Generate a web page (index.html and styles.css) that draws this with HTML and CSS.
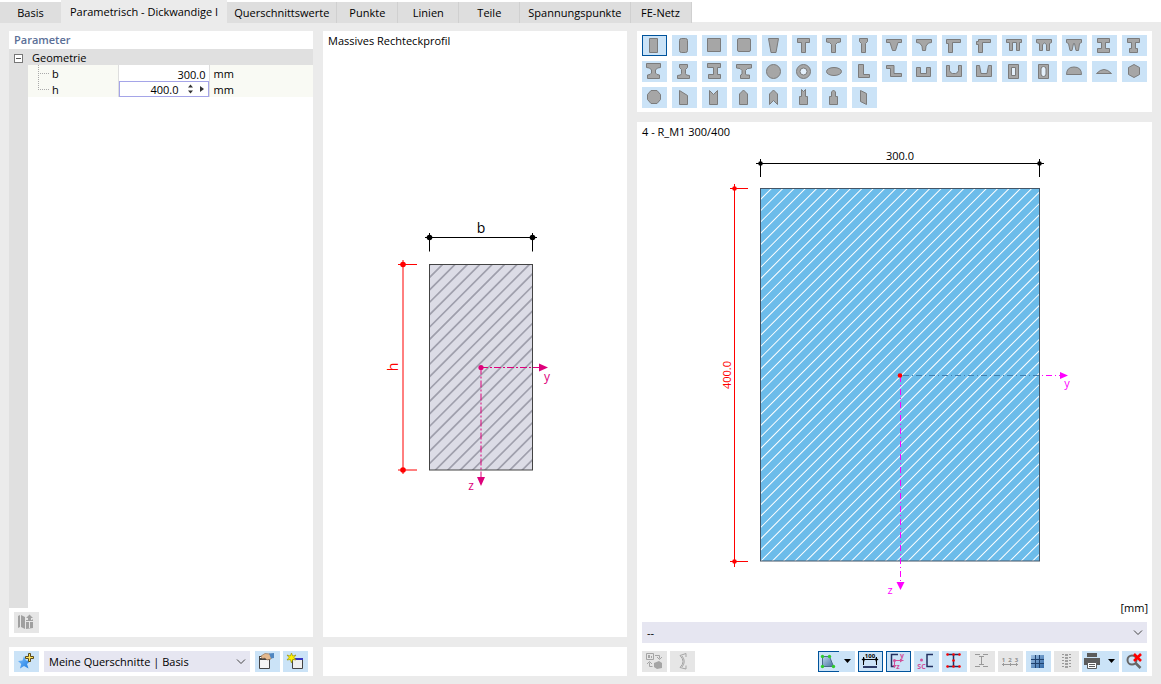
FILE: index.html
```html
<!DOCTYPE html>
<html lang="de">
<head>
<meta charset="utf-8">
<title>Querschnitt</title>
<link rel="stylesheet" href="styles.css">
</head>
<body>
<nav class="tabs" role="tablist">
  <button class="tab tab-first" role="tab">Basis</button>
  <button class="tab tab-active" role="tab" aria-selected="true">Parametrisch - Dickwandige I</button>
  <button class="tab tab-tight" role="tab">Querschnittswerte</button>
  <button class="tab tab-even" role="tab">Punkte</button>
  <button class="tab tab-even" role="tab">Linien</button>
  <button class="tab tab-even" role="tab">Teile</button>
  <button class="tab" role="tab">Spannungspunkte</button>
  <button class="tab tab-even" role="tab">FE-Netz</button>
</nav>
<main class="workspace">
  <div class="column">
    <section class="panel grow">
      <h2 class="param-title">Parameter</h2>
      <div class="param-body">
        <table class="params">
          <colgroup><col class="c-gutter"><col class="c-name"><col class="c-value"><col></colgroup>
          <tbody>
            <tr class="group"><td><button class="toggle" aria-label="Geometrie zuklappen"></button></td><th colspan="3">Geometrie</th></tr>
            <tr><td></td><th class="leaf"><label for="pb">b</label></th><td class="value"><input id="pb" type="text" value="300.0"></td><td class="unit">mm</td></tr>
            <tr><td></td><th class="leaf leaf-last"><label for="ph">h</label></th><td class="value"><div class="editing"><input id="ph" type="text" value="400.0"><button class="mini" aria-label="Wert ändern"><svg width="7" height="10" viewBox="0 0 7 10"><path d="M3.500 0.500 6 3.500H1zM3.500 9.500 1 6.500h5z"/></svg></button><button class="mini" aria-label="Mehr"><svg width="7" height="10" viewBox="0 0 7 10"><path d="M1 2 5 5 1 8z"/></svg></button></div></td><td class="unit">mm</td></tr>
          </tbody>
        </table>
      </div>
      <div class="toolbar">
        <button class="tool off" aria-label="Bibliothek"><svg viewBox="0 0 25 21"><path fill="#a0a0a0" d="M4 4l2-1v12l-2 1zM7 3l4 2v12l-4-2zM12 8h6l1-1v9l-7 1z"/><path fill="#a0a0a0" d="M15.500 2.500 19 6h-2v2h-3V6h-2z"/><path stroke="#e6e6e6" d="M12 9.500h7M15.500 10v6"/></svg></button>
      </div>
    </section>
    <section class="panel toolbar">
      <button class="tool" aria-label="Zu Favoriten"><svg viewBox="0 0 25 21"><defs><linearGradient id="star" x2="1" y2="1"><stop stop-color="#7cc0ff"/><stop offset="1" stop-color="#1c7be0"/></linearGradient></defs><path fill="url(#star)" d="M10 5l2 4.500 4.500.5-3.500 3 1.500 4.500-4.500-2.500-4 2.500 1.200-4.500L4 10l4.500-.5z"/><path fill="#ffe45c" stroke="#5a4a1c" d="M14.500 2.500h2v3h3v2h-3v3h-2v-3h-3v-2h3z"/></svg></button>
      <select class="combo combo-main" aria-label="Querschnittsliste"><option>Meine Querschnitte | Basis</option></select>
      <div class="tool-group">
        <button class="tool" aria-label="Bearbeiten"><svg viewBox="0 0 25 21"><path fill="#f4f4f4" stroke="#444" d="M4.500 7.500h10v10h-10z"/><path fill="#444" d="M4 5h11v4H4z"/><path fill="#fff" d="M5 6h3v1H5z"/><path fill="#e3b98f" stroke="#8b6a4c" stroke-width=".6" d="M6 5l4-2.500 5 .5 2 2-1 3-4 1-2-2-3 .5z"/><path fill="#4f86c0" d="M14 2.500l5-.5v5l-3 .5z"/></svg></button>
        <button class="tool" aria-label="Neu"><svg viewBox="0 0 25 21"><path fill="#f0f0f0" stroke="#444" d="M9.500 7.500h10v10h-10z"/><path fill="#3434c4" d="M9 7h11v2H9z"/><path fill="#fff000" stroke="#8f8a00" stroke-width=".6" d="M8.500 2l1.200 3 3.300-1-2 2.500 2 2.500-3.300-.5L8.500 12l-1.200-3.500L4 9l2-2.500L4 4l3.300 1z"/></svg></button>
      </div>
    </section>
  </div>

  <div class="column">
    <section class="panel grow">
      <h2 class="view-title">Massives Rechteckprofil</h2>
      <svg class="drawing" viewBox="0 0 304 586" role="img" aria-label="Profilskizze mit b und h">
        <defs><clipPath id="sketchArea"><rect x="106.500" y="213.500" width="103" height="205.500"/></clipPath></defs>
        <rect x="106.500" y="213.500" width="103" height="205.500" fill="#dcdce6"/>
        <g clip-path="url(#sketchArea)"><path d="M0 0L500 500" stroke="#9f9fac" stroke-width="900" stroke-dasharray="1.700 7.070" stroke-dashoffset="2.140"/></g>
        <rect x="106.500" y="213.500" width="103" height="205.500" fill="none" stroke="#444"/>
        <g stroke="#000"><path d="M102 186.500h112M106.500 182v18.500M209.500 182v18.500"/></g>
        <circle cx="106.500" cy="186.500" r="2.800"/><circle cx="209.500" cy="186.500" r="2.800"/>
        <text x="158" y="182" class="t14">b</text>
        <g stroke="#f00"><path d="M80 209v214M75 213.500h19M75 419h19"/></g>
        <g fill="#f00"><circle cx="80" cy="213.500" r="2.800"/><circle cx="80" cy="419" r="2.800"/><text transform="translate(75 316) rotate(-90)" class="t14">h</text></g>
        <g stroke="#dd007b" stroke-dasharray="7 2 2 2"><path d="M158 316.500h58M158 316.500v110"/></g>
        <g fill="#dd007b"><circle cx="158" cy="316.500" r="2.600"/><path d="M216 312.500l9 4-9 4zM154 426h8l-4 9z"/><text x="224" y="330" class="t12">y</text><text x="148" y="439" class="t12">z</text></g>
      </svg>
    </section>
    <section class="panel toolbar"></section>
  </div>

  <div class="column">
    <section class="panel shapes">
      <button class="tool shape sel" aria-label="Rechteck"><svg viewBox="0 0 25 21"><path d="M7.500 3.500h8v14h-8z"/></svg></button>
      <button class="tool shape" aria-label="Rechteck gerundet"><svg viewBox="0 0 25 21"><rect x="7.500" y="3.500" width="8" height="14" rx="2"/></svg></button>
      <button class="tool shape" aria-label="Quadrat"><svg viewBox="0 0 25 21"><path d="M5.500 3.500h13v13h-13z"/></svg></button>
      <button class="tool shape" aria-label="Quadrat gerundet"><svg viewBox="0 0 25 21"><rect x="5.500" y="3.500" width="13" height="13" rx="1.500"/></svg></button>
      <button class="tool shape" aria-label="Trapez"><svg viewBox="0 0 25 21"><path d="M6.500 3.500h10l-2.500 14h-5z"/></svg></button>
      <button class="tool shape" aria-label="T-Profil"><svg viewBox="0 0 25 21"><path d="M5.500 3.500h12v4h-4v10h-4v-10h-4z"/></svg></button>
      <button class="tool shape" aria-label="T-Profil mit Voute"><svg viewBox="0 0 25 21"><path d="M4.500 3.500h14v3.500l-3 .5-2 2v8h-4v-8l-2-2-3-.5z"/></svg></button>
      <button class="tool shape" aria-label="T-Profil schmal"><svg viewBox="0 0 25 21"><path d="M7.500 3.500h8v3l-2 2v9h-4v-9l-2-2z"/></svg></button>
      <button class="tool shape" aria-label="T-Profil trapezförmig"><svg viewBox="0 0 25 21"><path d="M4.500 4.500h15v3h-3.500l-2.500 8h-3l-2.500-8h-3.500z"/></svg></button>
      <button class="tool shape" aria-label="T-Profil trapezförmig mit Voute"><svg viewBox="0 0 25 21"><path d="M4.500 4.500h15v3l-3 .5-2.500 3-.5 4.500h-3l-.5-4.500-2.500-3-3-.5z"/></svg></button>
      <button class="tool shape" aria-label="Randträger"><svg viewBox="0 0 25 21"><path d="M4.500 4.500h14v3h-8v10h-4v-9h-2z"/></svg></button>
      <button class="tool shape" aria-label="Randträger versetzt"><svg viewBox="0 0 25 21"><path d="M6.500 4.500h12v3h-8v10h-4v-8h-2v-3h2z"/></svg></button>
      <button class="tool shape" aria-label="Pi-Profil"><svg viewBox="0 0 25 21"><path d="M4.500 4.500h15v3h-2v8h-3v-8h-4v8h-3v-8h-3z"/></svg></button>
      <button class="tool shape" aria-label="Pi-Profil mit Voute"><svg viewBox="0 0 25 21"><path d="M4.500 4.500h15v3l-2 1v7h-3v-6q-2-3-4 0v6h-3v-7l-3-1z"/></svg></button>
      <button class="tool shape" aria-label="Pi-Profil trapezförmig"><svg viewBox="0 0 25 21"><path d="M4.500 4.500h15v3l-2 1-1 7h-2.500l-1.500-7h-1l-1.500 7H8l-1.500-7-2-1z"/></svg></button>
      <button class="tool shape" aria-label="I-Profil"><svg viewBox="0 0 25 21"><path d="M5.500 3.500h12v4h-4v6h4v4h-12v-4h4v-6h-4z"/></svg></button>
      <button class="tool shape" aria-label="I-Profil unsymmetrisch"><svg viewBox="0 0 25 21"><path d="M5.500 3.500h12v4h-4v6h2v4h-8v-4h2v-6h-4z"/></svg></button>
      <button class="tool shape" aria-label="I-Profil mit Vouten"><svg viewBox="0 0 25 21"><path d="M4.500 2.500h14v4l-3 .5-2 2v3l1.500 1.500 2.500.5v3.500h-12v-3.500l2.500-.5 1.500-1.500v-3l-2-2-3-.5z"/></svg></button>
      <button class="tool shape" aria-label="I-Profil mit breitem Fuß"><svg viewBox="0 0 25 21"><path d="M7.500 3.500h8v3l-2 2v4l1 1.500 3 .5v3h-12v-3l3-.5 1-1.500v-4l-2-2z"/></svg></button>
      <button class="tool shape" aria-label="I-Profil versetzt"><svg viewBox="0 0 25 21"><path d="M5.500 2.500h13v4h-3v7h3v4h-12v-4h5v-7h-6z"/></svg></button>
      <button class="tool shape" aria-label="I-Profil mit breitem Kopf"><svg viewBox="0 0 25 21"><path d="M4.500 3.500h15v3.500l-4 .5-2 2v3.500l1 1h3v3.500h-9v-3.500h.5l1-1v-3.500l-2-2-3.500-.5z"/></svg></button>
      <button class="tool shape" aria-label="Kreis"><svg viewBox="0 0 25 21"><circle cx="11.500" cy="10.500" r="7"/></svg></button>
      <button class="tool shape" aria-label="Kreisring"><svg viewBox="0 0 25 21"><circle cx="11.500" cy="10.500" r="7"/><circle class="hole" cx="11.500" cy="10.500" r="3.500"/></svg></button>
      <button class="tool shape" aria-label="Ellipse"><svg viewBox="0 0 25 21"><ellipse cx="12" cy="10.500" rx="7.500" ry="4"/></svg></button>
      <button class="tool shape" aria-label="L-Profil"><svg viewBox="0 0 25 21"><path d="M6.500 3.500h5v10h6v3h-11z"/></svg></button>
      <button class="tool shape" aria-label="Z-Profil"><svg viewBox="0 0 25 21"><path d="M4.500 4.500h7.500v8h7.500v3h-11v-8h-4z"/></svg></button>
      <button class="tool shape" aria-label="U-Profil"><svg viewBox="0 0 25 21"><path d="M4.500 6.500h4v6h6v-6h4v9h-14z"/></svg></button>
      <button class="tool shape" aria-label="U-Profil gerundet"><svg viewBox="0 0 25 21"><path d="M4.500 4.500h3v5q1 3 3 3h3q2 0 3-3v-5h3v11h-15z"/></svg></button>
      <button class="tool shape" aria-label="U-Profil konisch"><svg viewBox="0 0 25 21"><path d="M4.500 4.500h3l1.500 8h6l1.500-8h3v11h-15z"/></svg></button>
      <button class="tool shape" aria-label="Hohlkasten"><svg viewBox="0 0 25 21"><path d="M6.500 3.500h10v14h-10z"/><path class="hole" d="M9.500 6.500h4v8h-4z"/></svg></button>
      <button class="tool shape" aria-label="Hohlkasten oval"><svg viewBox="0 0 25 21"><path d="M6.500 3.500h10v14h-10z"/><rect class="hole" x="9" y="5.500" width="5" height="10" rx="2.500"/></svg></button>
      <button class="tool shape" aria-label="Halbkreis"><svg viewBox="0 0 25 21"><path d="M4.500 13.500q0-7.500 7.500-7.500t7.500 7.500z"/></svg></button>
      <button class="tool shape" aria-label="Kreissegment"><svg viewBox="0 0 25 21"><path d="M4.500 12.500q7.500-8 15 0z"/></svg></button>
      <button class="tool shape" aria-label="Sechseck"><svg viewBox="0 0 25 21"><path d="M12 3.500l5.500 3v7l-5.500 3-5.500-3v-7z"/></svg></button>
      <button class="tool shape" aria-label="Achteck"><svg viewBox="0 0 25 21"><path d="M9 3.500h6l3.500 4v5l-3.500 4H9l-3.500-4v-5z"/></svg></button>
      <button class="tool shape" aria-label="Schräg oben"><svg viewBox="0 0 25 21"><path d="M7.500 3.500l8 5v9h-8z"/></svg></button>
      <button class="tool shape" aria-label="Kerbe oben"><svg viewBox="0 0 25 21"><path d="M7.500 3.500l4 4 4-4v14h-8z"/></svg></button>
      <button class="tool shape" aria-label="Spitze oben"><svg viewBox="0 0 25 21"><path d="M11.500 3l4 4v10.500h-8V7z"/></svg></button>
      <button class="tool shape" aria-label="Spitze mit Kerbe"><svg viewBox="0 0 25 21"><path d="M11.500 3l4 4v10.500l-4-4-4 4V7z"/></svg></button>
      <button class="tool shape" aria-label="Abgesetzt mit Kerbe"><svg viewBox="0 0 25 21"><path d="M9.500 2.500l2 2 2-2v7h2v8h-8v-8h2z"/></svg></button>
      <button class="tool shape" aria-label="Abgesetzt mit Spitze"><svg viewBox="0 0 25 21"><path d="M11.500 3l2 2v4.500h2v8h-8v-8h2V5z"/></svg></button>
      <button class="tool shape" aria-label="Parallelogramm"><svg viewBox="0 0 25 21"><path d="M8.500 3.500l6 3v11l-6-3z"/></svg></button>
    </section>

    <section class="panel grow">
      <h2 class="view-title">4 - R_M1 300/400</h2>
      <svg class="drawing" viewBox="0 0 515 458" role="img" aria-label="Querschnitt 300 mal 400 mm">
        <defs><clipPath id="sectionArea"><rect x="123.500" y="46.500" width="279" height="372.500"/></clipPath></defs>
        <rect x="123.500" y="46.500" width="279" height="372.500" fill="#6cbcea"/>
        <g clip-path="url(#sectionArea)"><path d="M0 0L500 500" stroke="#fff" stroke-width="1200" stroke-dasharray="1 7" stroke-dashoffset="0.500"/></g>
        <rect x="123.500" y="46.500" width="279" height="372.500" fill="none" stroke="#445566"/>
        <path stroke="#000" d="M119 21.500h288M123.500 17v18M402.500 17v18"/>
        <circle cx="123.500" cy="21.500" r="2.300"/><circle cx="402.500" cy="21.500" r="2.300"/>
        <text x="263" y="18" class="t11">300.0</text>
        <path stroke="#f00" d="M97.500 42v383M93 46.500h18M93 419.500h18"/>
        <g fill="#f00"><circle cx="97.500" cy="46.500" r="2.300"/><circle cx="97.500" cy="419.500" r="2.300"/><text transform="translate(94 233) rotate(-90)" class="t11">400.0</text></g>
        <path stroke="#f0f" stroke-dasharray="6 3 1 3" d="M266 233.500h157M263.500 234v206"/>
        <path stroke="#3f7fb0" stroke-dasharray="6 3 1 3" d="M266 233.500h137"/>
        <g fill="#f0f"><path d="M423 230l8 3.500-8 3.500zM259.500 440h8l-4 8z"/><text x="430" y="245" class="t11">y</text><text x="253" y="452" class="t11">z</text></g>
        <circle cx="263" cy="233.500" r="2.300" fill="#f00"/>
      </svg>
      <div class="unit-note">[mm]</div>
      <div class="combo-row"><select class="combo combo-wide" aria-label="Auswahl"><option>--</option></select></div>
      <div class="toolbar">
        <div class="tool-group">
          <button class="tool off" aria-label="Tauschen"><svg viewBox="0 0 25 21"><path fill="none" stroke="#a5a5a5" d="M4.500 2.500h7v6h-7z"/><path fill="#a5a5a5" d="M6 4h2v3H6zM9 5h1v2H9zM12 12l5-2 3 2v5l-5 1-3-2z"/><path fill="none" stroke="#a5a5a5" d="M13 4.500h4.500v3M15 6l2.500 2.500L20 6M10.500 15.500h-3v-4M5 13l2.500-2.500L10 13"/></svg></button>
          <button class="tool off" aria-label="Spiegeln"><svg viewBox="0 0 25 21"><path fill="none" stroke="#a5a5a5" d="M16 6V2.500l-6 2q6 6 0 12l6 1.500v-3.500M12 5q4.500 5.500 0 11"/></svg></button>
        </div>
        <div class="tool-group">
          <div class="split"><button class="tool split-main" aria-label="Darstellung"><svg viewBox="0 0 21 21"><defs><linearGradient id="steel" x2="1" y2="1"><stop stop-color="#bcd6ee"/><stop offset="1" stop-color="#45709e"/></linearGradient></defs><path fill="url(#steel)" stroke="#4a6a8a" d="M4.500 5.500h7l4 10h-11z"/><g fill="#2ecc2e"><circle cx="4.500" cy="5.500" r="1.700"/><circle cx="11.500" cy="5.500" r="1.700"/><circle cx="15.500" cy="15.500" r="1.700"/><circle cx="4.500" cy="15.500" r="1.700"/></g></svg></button><button class="tool arrow" aria-label="Darstellung wählen"><svg viewBox="0 0 16 21"><path d="M5 8h7l-3.500 4z"/></svg></button></div>
          <button class="tool sel" aria-label="Bemaßung"><svg viewBox="0 0 25 21"><path stroke="#000" d="M4 8.500h16M5.500 6v8M18.500 6v8"/><path d="M3.500 8.500l3-2v4zM20.500 8.500l-3-2v4z"/><path fill="#2b3a66" d="M5 15h14v2H5z"/><text x="12" y="7" class="t6">100</text></svg></button>
          <button class="tool sel" aria-label="Achsen"><svg viewBox="0 0 25 21"><path fill="none" stroke="#223060" stroke-width="1.500" d="M12 3.500H5.500v12H8"/><path stroke="#d0509a" d="M8.500 9.500h9M8.500 9.500v7"/><path fill="#d0509a" d="M14 7.500l3 2-3 2zM6.500 14h4l-2 3z"/><circle cx="8.500" cy="9.500" r="1.500" fill="#d0509a"/><g fill="#d0509a"><text x="16" y="7" class="t7">y</text><text x="12" y="18" class="t7">z</text></g></svg></button>
          <button class="tool" aria-label="Schubmittelpunkt"><svg viewBox="0 0 25 21"><path fill="none" stroke="#223060" stroke-width="1.500" d="M19 3.500h-6v12h6"/><circle cx="7.500" cy="9" r="1.500" fill="#d0509a"/><text x="7.500" y="17.500" class="t7" fill="#d0509a">SC</text></svg></button>
          <button class="tool" aria-label="Teile"><svg viewBox="0 0 25 21"><path stroke="#223060" stroke-width="1.500" d="M5 3.500h13M5 15.500h13M11.500 3.500v12"/><g fill="#f00"><circle cx="5.500" cy="3.500" r="1.300"/><circle cx="11.500" cy="3.500" r="1.300"/><circle cx="17.500" cy="3.500" r="1.300"/><circle cx="11.500" cy="9.500" r="1.300"/><circle cx="5.500" cy="15.500" r="1.300"/><circle cx="11.500" cy="15.500" r="1.300"/><circle cx="17.500" cy="15.500" r="1.300"/></g></svg></button>
          <button class="tool off" aria-label="Umriss"><svg viewBox="0 0 25 21"><path stroke="#999" d="M5 3.500h5M13 3.500h5M5 15.500h5M13 15.500h5M9 5.500h5M9 13.500h5M11.500 5v9"/></svg></button>
          <button class="tool off" aria-label="Nummerierung"><svg viewBox="0 0 25 21"><path stroke="#999" d="M4 13.500h16M5.500 12v3M12.500 12v3M18.500 12v3"/><g fill="#909090"><text x="5.500" y="10.500" class="t6">1</text><text x="12" y="10.500" class="t6">2</text><text x="18.500" y="10.500" class="t6">3</text></g></svg></button>
          <button class="tool" aria-label="Raster"><svg viewBox="0 0 25 21"><defs><linearGradient id="cells" x2="1" y2="1"><stop stop-color="#9fc0e2"/><stop offset="1" stop-color="#2f68a8"/></linearGradient></defs><path fill="url(#cells)" d="M5 4h13v13H5z"/><path fill="none" stroke="#1f416e" d="M9.500 4v13M13.500 4v13M5 8.500h13M5 12.500h13"/></svg></button>
          <button class="tool off" aria-label="Punktraster"><svg viewBox="0 0 25 21"><path stroke="#a0a0a0" stroke-width="3" stroke-dasharray="2 1" d="M12.500 3v14"/><path stroke="#999" stroke-width="2" stroke-dasharray="1 2" d="M9 3v14M16 3v14"/></svg></button>
          <button class="tool print" aria-label="Drucken"><svg viewBox="0 0 37 21"><path fill="#5c5c5c" d="M5 2h10v4H5zM2 7h16v7h-3v-2H5v2H2z"/><path fill="#fff" stroke="#5c5c5c" d="M5.500 11.500h9v6h-9z"/><path stroke="#5c5c5c" d="M7 13.500h6M7 15.500h6"/><path d="M26 8h7l-3.500 4z"/></svg></button>
          <button class="tool" aria-label="Zoom zurücksetzen"><svg viewBox="0 0 25 21"><circle cx="10" cy="9" r="4.500" fill="#cbe3f7" stroke="#666" stroke-width="2"/><path stroke="#666" stroke-width="2.500" d="M13.500 12l5 5"/><path stroke="#f00" stroke-width="2.600" d="M12 3l7 7M19 3l-7 7"/></svg></button>
        </div>
      </div>
    </section>
  </div>
</main>
</body>
</html>
```
FILE: styles.css
```css
* { box-sizing: border-box; }

body {
  margin: 0;
  min-height: 100vh;
  display: flex;
  flex-direction: column;
  background: #ebebeb;
  color: #000;
  font: 11px/16px "Open Sans", "Noto Sans", sans-serif;
}

button, input, select {
  font: inherit;
  color: inherit;
  border: 0;
  margin: 0;
  padding: 0;
  background: none;
}

h2 { margin: 0; font: inherit; }
svg { display: block; }

.tabs {
  display: flex;
  height: 22px;
  padding-top: 2px;
  background: #fff;
}

.tab {
  height: 21px;
  padding: 0 8px;
  background: #dedede;
  border-right: 1px solid #d0d0d0;
  white-space: nowrap;
}
.tab-first { width: 61px; border-right: 0; }
.tab-tight { padding: 0 7px; }
.tab-even { width: 61px; padding: 0; }
.tab-active { height: 24px; margin-top: -2px; padding: 0 9px; background: #ebebeb; border-right: 0; }

.workspace {
  flex: 1;
  display: grid;
  grid-template-columns: 304fr 304fr 515fr;
  gap: 10px;
  padding: 9px 9px 8px;
}

.column { display: flex; flex-direction: column; gap: 10px; min-width: 0; }
.panel { background: #fff; }
.grow { flex: 1; display: flex; flex-direction: column; min-height: 0; }

.param-title { height: 18px; padding: 1px 5px; color: #5b6f97; font-weight: 600; }
.param-body { flex: 1; background: linear-gradient(to right, #e0e0e0 19px, #fff 19px); }

.params { width: 100%; table-layout: fixed; border-collapse: collapse; }
.params tr { height: 16px; background: #f9faf4; }
.params .group { background: #e0e0e0; }
.params td, .params th { padding: 2px 0 0; height: 16px; line-height: 14px; font-weight: 400; text-align: left; }
.params td:first-child { background: #e0e0e0; }
.params .group th { padding-left: 4px; }
.c-gutter { width: 19px; }
.c-name { width: 90px; }
.c-value { width: 91px; }

.toggle {
  display: block;
  width: 9px;
  height: 9px;
  margin-left: 5px;
  border: 1px solid #777;
  background: linear-gradient(#555, #555) center / 5px 1px no-repeat #fff;
}

.params .leaf {
  padding-left: 24px;
  background:
    repeating-linear-gradient(to right, #aaa 0 1px, transparent 1px 2px) 10px 8px / 11px 1px no-repeat,
    repeating-linear-gradient(to bottom, #aaa 0 1px, transparent 1px 2px) 10px 0 / 1px 16px no-repeat;
}
.params .leaf-last {
  background:
    repeating-linear-gradient(to right, #aaa 0 1px, transparent 1px 2px) 10px 8px / 11px 1px no-repeat,
    repeating-linear-gradient(to bottom, #aaa 0 1px, transparent 1px 2px) 10px 0 / 1px 8px no-repeat;
}

.value input { display: block; width: 100%; height: 16px; padding: 2px 3px 0 0; text-align: right; }
.params .value { padding: 0; background: #fff; border-left: 1px solid #dedede; border-right: 1px solid #dedede; }
.editing { display: flex; align-items: center; height: 16px; border: 1px solid #a5a5e8; }
.editing input { flex: 1; min-width: 0; height: 14px; padding-right: 5px; }
.mini { width: 12px; padding-left: 3px; }
.mini svg { fill: #333; }
.params .unit { padding-left: 4px; }

.toolbar { display: flex; align-items: center; justify-content: space-between; gap: 5px; padding: 4px 5px; min-height: 29px; }
.tool-group { display: flex; gap: 3px; }

.tool { flex: none; width: 25px; height: 21px; background: #cbe3f7; }
.tool svg { width: 100%; height: 21px; }
.off { background: #e6e6e6; }
.sel { box-shadow: inset 0 0 0 1px #00539c; }
.split { display: flex; }
.split-main { width: 21px; box-shadow: inset 1px 1px #00539c, inset 0 -1px #00539c; }
.arrow { width: 16px; }
.print { width: 37px; }

.combo {
  height: 21px;
  padding: 0 5px;
  appearance: none;
  background: #e6e6f1 url("data:image/svg+xml,%3Csvg xmlns='http://www.w3.org/2000/svg' width='10' height='6'%3E%3Cpath d='M1 .5l4 4 4-4' fill='none' stroke='%23444'/%3E%3C/svg%3E") right 4px center no-repeat;
}
.combo-main { flex: 1; min-width: 0; }
.combo-wide { width: 100%; }
.combo-row { display: flex; padding: 5px 5px 4px; }

.view-title { height: 20px; padding: 2px 5px; }
.drawing { flex: 1; width: 100%; min-height: 0; }
.unit-note { height: 17px; padding-right: 4px; text-align: right; }

.shapes { display: flex; flex-wrap: wrap; gap: 5px; padding: 4px 5px; }
.shape path, .shape rect, .shape circle, .shape ellipse { fill: #a6a6a6; stroke: #7b7b7b; }
.shape .hole { fill: #e4f0fb; }

text { text-anchor: middle; }
.t14 { font-size: 14px; }
.t12 { font-size: 12px; }
.t11 { font-size: 11px; }
.t7 { font-size: 7px; font-weight: 700; }
.t6 { font-size: 6px; font-weight: 700; }
```
